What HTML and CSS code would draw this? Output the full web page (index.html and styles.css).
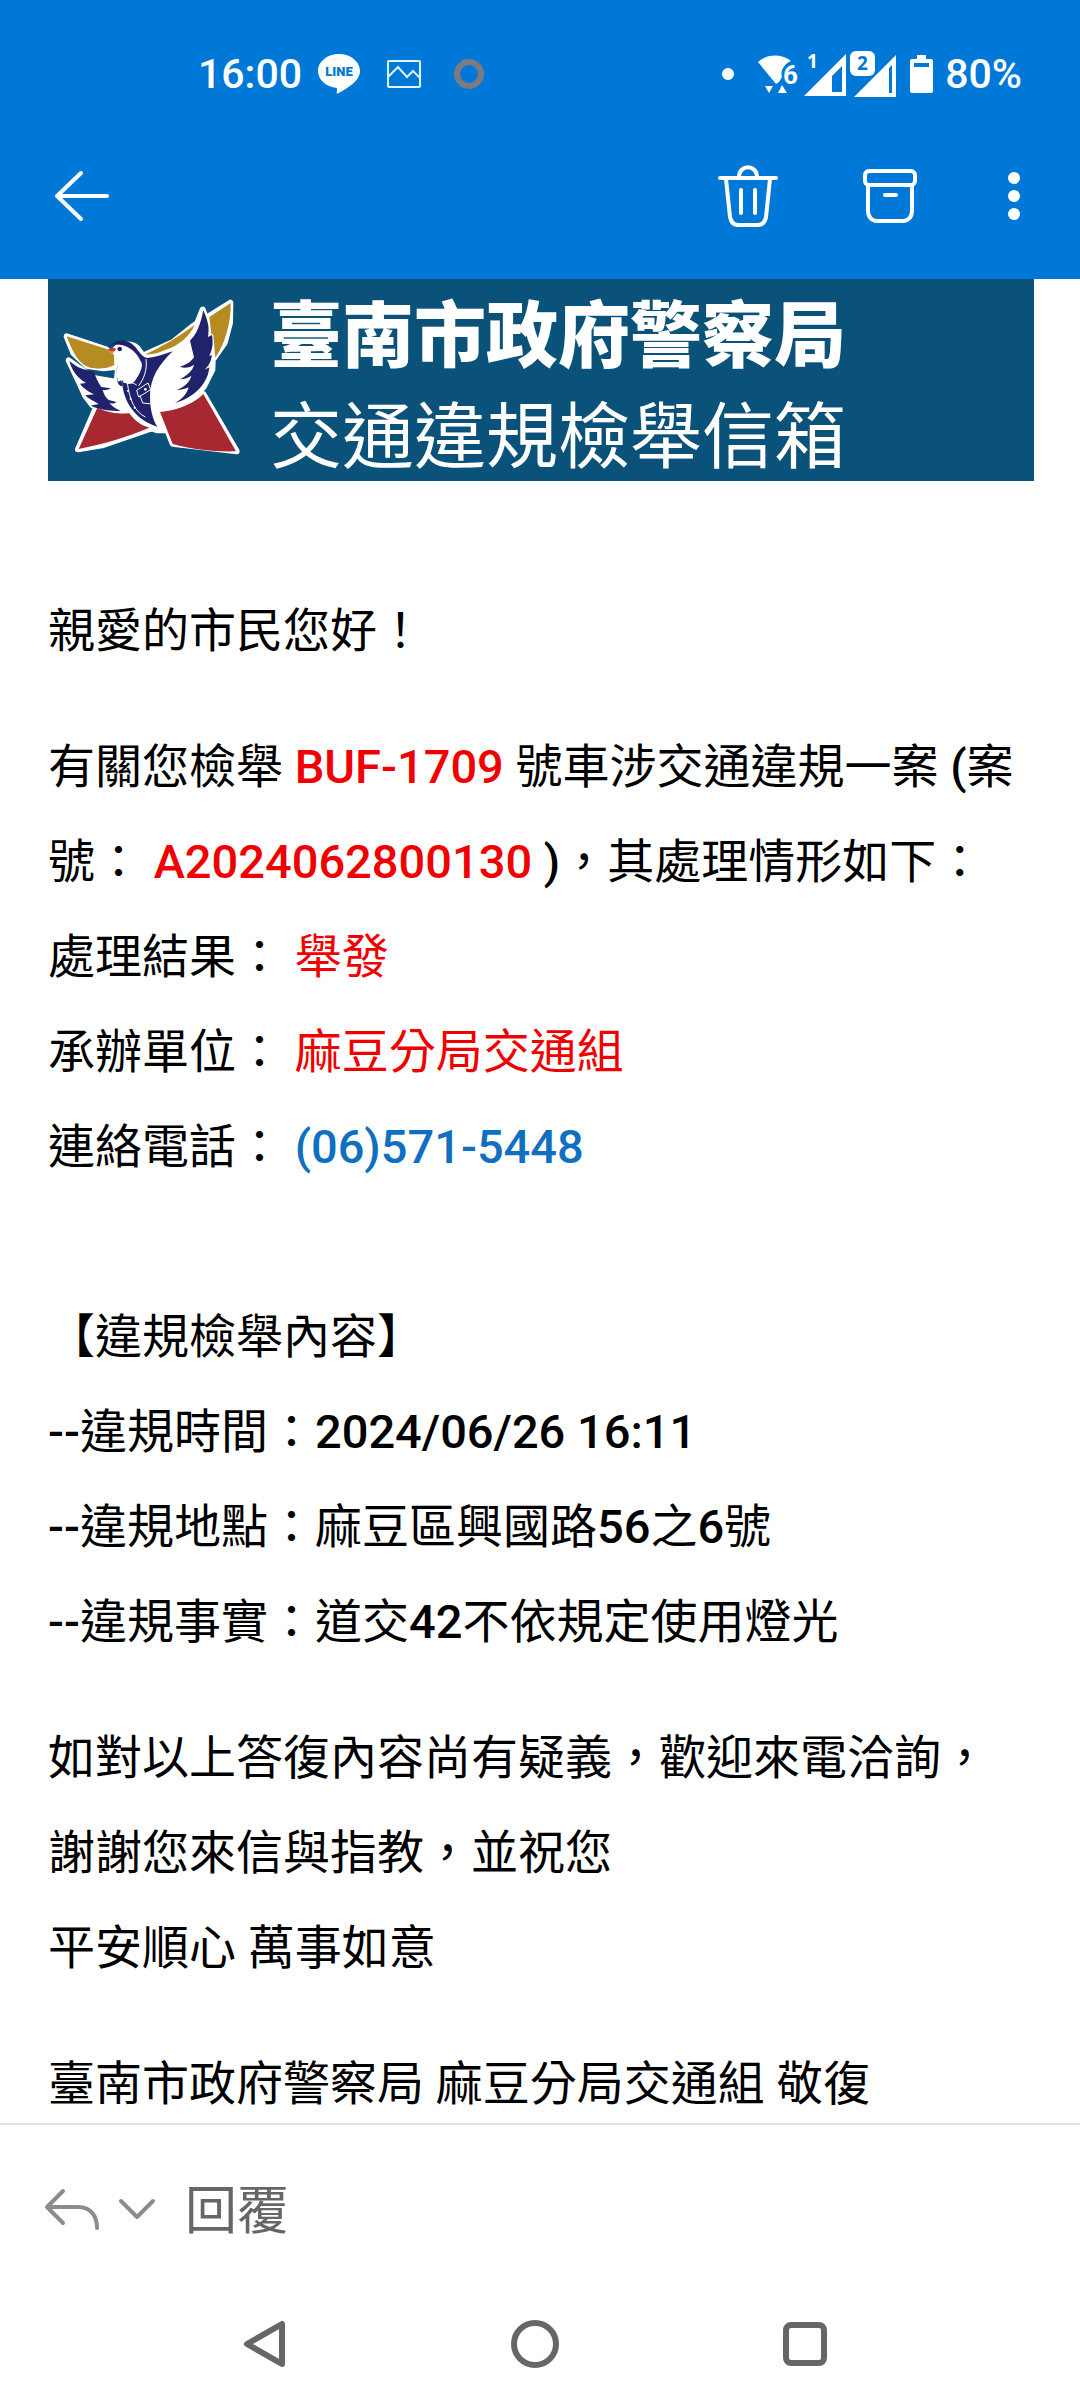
FILE: index.html
```html
<!DOCTYPE html>
<html lang="zh-Hant">
<head>
  <meta charset="UTF-8" />
  <title>交通違規檢舉信箱</title>
  <meta name="viewport" content="width=device-width, initial-scale=1.0" />
  <link rel="stylesheet" href="styles.css">
</head>
<body>
  <header class="app-header">
    <div class="status-bar">
      <span class="clock">16:00</span>
      <svg class="line-icon" width="42" height="40" viewBox="0 0 42 40">
        <path d="M21 0C9.500 0 0 7.500 0 17c0 8.500 7.500 15.500 17.800 16.800 1.600.4 1.400 1.500.9 4.700-.1.900.5 1.400 1.600.8C28 35 42 27.500 42 17 42 7.500 32.500 0 21 0z" fill="#fff"/>
        <text x="21" y="22" text-anchor="middle">LINE</text>
      </svg>
      <svg class="photo-icon" width="34" height="28" viewBox="0 0 34 28" fill="none" stroke="#dff6ff" stroke-width="2">
        <rect x="1" y="1" width="32" height="26" rx="1"/>
        <path d="M1 17l10-10 9 10 6-6 7 7"/>
      </svg>
      <svg width="32" height="32" viewBox="0 0 32 32">
        <circle cx="16" cy="16" r="12" fill="none" stroke="#7b7b80" stroke-width="6"/>
      </svg>
      <div class="status-right">
        <svg class="dot-icon" width="12" height="12" viewBox="0 0 12 12"><circle cx="6" cy="6" r="6" fill="#fff"/></svg>
        <svg class="wifi-icon" width="40" height="42" viewBox="0 0 40 42" fill="#fff">
          <path d="M0 9C9 .500 24 .500 33 8c-7 3-11 10-9 16l-3 5-3 2z"/>
          <path d="M7 33h8l-4 7zM20 40h9l-5-8z"/>
          <text x="25" y="31">6</text>
        </svg>
        <svg class="signal-icon" width="43" height="44" viewBox="0 0 43 44">
          <path d="M42 2v42H0zM38 14L28 24v16h10z" fill="#fff" fill-rule="evenodd"/>
          <text x="3" y="16" fill="#fff">1</text>
        </svg>
        <svg class="signal-icon" width="47" height="46" viewBox="0 0 47 46">
          <path d="M46 4v42H4zM42 14l-3 3v25h3z" fill="#fff" fill-rule="evenodd"/>
          <rect x="0" y="0" width="25" height="25" rx="6" fill="#fff"/>
          <text x="7" y="19" fill="#0078d7">2</text>
        </svg>
        <svg class="battery-icon" width="23" height="38" viewBox="0 0 23 38">
          <path d="M7 0h9v4h5a2 2 0 0 1 2 2v30a2 2 0 0 1-2 2H2a2 2 0 0 1-2-2V6a2 2 0 0 1 2-2h5zM4 8v4h15V8z" fill="#fff" fill-rule="evenodd"/>
        </svg>
        <span class="percent">80%</span>
      </div>
    </div>
    <nav class="toolbar">
      <button class="icon-btn" aria-label="返回">
        <svg width="54" height="50" viewBox="0 0 54 50" fill="none" stroke="#fff" stroke-width="4" stroke-linecap="round" stroke-linejoin="round">
          <path d="M26 2L2 25l24 23M2 25h50"/>
        </svg>
      </button>
      <button class="icon-btn delete-btn" aria-label="刪除">
        <svg width="60" height="62" viewBox="0 0 60 62" fill="none" stroke="#fff" stroke-width="4" stroke-linecap="round" stroke-linejoin="round">
          <path d="M2 13h56M21 12c0-13 18-13 18 0M8 14l4 38c1 5 4 8 8 8h20c4 0 7-3 8-8l4-38M23 25v23M37 25v23"/>
        </svg>
      </button>
      <button class="icon-btn archive-btn" aria-label="封存">
        <svg width="54" height="54" viewBox="0 0 54 54" fill="none" stroke="#fff" stroke-width="4" stroke-linecap="round" stroke-linejoin="round">
          <rect x="2" y="2" width="50" height="14" rx="4"/>
          <path d="M5 17v25c0 6 4 10 9 10h26c5 0 9-4 9-10V17M22 26h11"/>
        </svg>
      </button>
      <button class="icon-btn more-btn" aria-label="更多選項">
        <svg width="12" height="48" viewBox="0 0 12 48" fill="#fff">
          <circle cx="6" cy="6" r="6"/><circle cx="6" cy="24" r="6"/><circle cx="6" cy="42" r="6"/>
        </svg>
      </button>
    </nav>
  </header>

  <main class="mail">
    <div class="banner">
      <svg class="logo" width="179" height="167" viewBox="66 80 537 501">
        <!-- white outline behind every part -->
        <g fill="#fff" stroke="#fff" stroke-width="18" stroke-linejoin="round">
          <path d="M168 412L114 537l72-12 146-50-62-50zM360 425l38 95 192 23-100-172z"/>
          <path d="M80 198l20 50 40 38 50 8 34-4-4-34-20-18zM318 252l80-36 60-48 113-71-1 60-16 60-32 46-62-80-80 50z"/>
          <path d="M86 270l34 72 16 35 22 28 60 14 50 6 35 40 50 15 22 0 4-62 64-20 48-48 26-52 2-54-6-60-25-66-22 55-68 62-50 22-34 6-22-30c-22-18-58-12-74 14l-10 12 28 16-6 60-70-12z"/>
        </g>
        <path d="M80 198l120 38 22 18 1 30c-20 12-52 12-72 8-36-8-55-52-71-94z" fill="#b58c22"/>
        <path d="M316 252c48-22 92-48 148-88-14 32-46 62-90 76-18 8-38 14-58 12zM508 140l64-42c2 54-16 122-46 164l-6-68-6-4z" fill="#b58c22"/>
        <path d="M172 412c32 16 62 18 96 17 16 22 34 36 60 43-70 30-138 48-212 64zM360 425c44-4 96-20 130-54l98 172c-68 2-130-6-190-22z" fill="#a72831"/>
        <path d="M88 272c24 20 44 28 72 30 8 20 16 38 24 48l28 4c-10 6-20 6-24 5 4 14 10 24 18 30l24 6c-10 6-18 5-22 3 8 10 20 18 34 24-30 0-62-4-90-16l24-5c-18-10-32-16-40-26l26-3c-20-10-34-20-42-32l18-2c-22-12-42-34-50-66z" fill="#20226b"/>
        <path d="M490 120c16 36 18 54 14 80l12-6c4 28 2 38-8 64l8-4c-4 24-10 32-22 44l14-7c-4 42-34 86-104 108 24-14 36-28 42-48-8 4-20 8-36 8 26-10 40-26 44-42-10 6-22 10-34 10 24-14 38-26 42-44-12 8-28 12-42 6 22-6 34-16 42-28l-12-50c20-18 32-50 40-91z" fill="#20226b"/>
        <path d="M204 234c16-28 58-34 84-2 14 18 20 28 34 31 26-2 48-10 76-20-42 40-68 82-68 134 0 38 8 72 22 92-66-20-104-76-106-140 10 14 26 16 38 4 12-16 30-48 18-60-16-38-50-54-84-50-6 1-10 6-14 11z" fill="#20226b"/>
        <path d="M234 276c-6 22-6 42 0 58l10-4 4 18c-22 0-20-42-14-72z" fill="#20226b"/>
        <path d="M318 266c4 32-6 60-22 80M250 336c20-2 34 4 40 8M262 336c6 52 22 88 54 104M290 360l34-22 8 20-36 22zM300 376l8 22 30 3" fill="none" stroke="#fff" stroke-width="3"/>
        <g fill="#fff"><circle cx="264" cy="362" r="3"/><circle cx="272" cy="386" r="3"/><circle cx="284" cy="412" r="3"/><circle cx="316" cy="357" r="4"/></g>
        <circle cx="239" cy="236" r="7" fill="#20226b"/>
        <path d="M202 240c8-8 18-10 26-5-4 10-8 12-26 5z" fill="#c23b35"/>
        <path d="M203 241l18 2-2 8z" fill="#d8902c"/>
      </svg>
      <h1 class="banner-title">臺南市政府警察局<span>交通違規檢舉信箱</span></h1>
    </div>

    <div class="mail-body">
      <p>親愛的市民您好！</p>
      <p>
        有關您檢舉 <b class="highlight">BUF-1709</b> 號車涉交通違規一案 <b>(</b>案號： <b class="highlight">A2024062800130</b> <b>)</b>，其處理情形如下：<br>
        處理結果： <span class="highlight">舉發</span><br>
        承辦單位： <span class="highlight">麻豆分局交通組</span><br>
        連絡電話： <a href="tel:065715448">(06)571-5448</a><br>
        <br>
        【違規檢舉內容】<br>
        <b>--</b>違規時間：<b>2024/06/26 16:11</b><br>
        <b>--</b>違規地點：麻豆區興國路<b>56</b>之<b>6</b>號<br>
        <b>--</b>違規事實：道交<b>42</b>不依規定使用燈光
      </p>
      <p>
        如對以上答復內容尚有疑義，歡迎來電洽詢，<br>
        謝謝您來信與指教，並祝您<br>
        平安順心 萬事如意
      </p>
      <p>臺南市政府警察局 麻豆分局交通組 敬復</p>
    </div>
  </main>

  <footer class="app-footer">
    <div class="reply-bar">
      <button class="icon-btn" aria-label="回覆寄件者">
        <svg width="54" height="42" viewBox="0 0 54 42" fill="none" stroke="#8c8c8c" stroke-width="4" stroke-linecap="round" stroke-linejoin="round">
          <path d="M18 3L2 19l16 16M2 19h31c12 0 19 8 19 21"/>
        </svg>
      </button>
      <button class="icon-btn" aria-label="回覆選項">
        <svg width="36" height="20" viewBox="0 0 36 20" fill="none" stroke="#8c8c8c" stroke-width="4" stroke-linecap="round" stroke-linejoin="round">
          <path d="M2 2l16 16L34 2"/>
        </svg>
      </button>
      <button class="reply-btn">回覆</button>
    </div>
    <nav class="nav-bar">
      <button class="icon-btn" aria-label="上一頁">
        <svg width="42" height="46" viewBox="0 0 42 46" fill="none" stroke="#666" stroke-width="6" stroke-linejoin="round">
          <path d="M3 23L38 3v40z"/>
        </svg>
      </button>
      <button class="icon-btn" aria-label="主畫面">
        <svg width="48" height="48" viewBox="0 0 48 48" fill="none" stroke="#666" stroke-width="6"><circle cx="24" cy="24" r="21"/></svg>
      </button>
      <button class="icon-btn" aria-label="最近使用">
        <svg width="44" height="44" viewBox="0 0 44 44" fill="none" stroke="#666" stroke-width="6"><rect x="3" y="3" width="38" height="38" rx="5"/></svg>
      </button>
    </nav>
  </footer>
</body>
</html>
```
FILE: styles.css
```css
* {
  box-sizing: border-box;
}

body {
  font-family: Roboto, 'Noto Sans CJK TC', sans-serif;
  margin: 0;
  height: 100vh;
  display: flex;
  flex-direction: column;
  background: #fff;
  color: #000;
}

svg {
  display: block;
  flex-shrink: 0;
  overflow: visible;
}

.icon-btn {
  display: flex;
  align-items: center;
  justify-content: center;
  padding: 0;
  border: none;
  background: none;
  cursor: pointer;
}

.app-header {
  flex-shrink: 0;
  padding-bottom: 35px;
  background: #0078d7;
  color: #fff;
}

.status-bar {
  display: flex;
  align-items: center;
  height: 148px;
  padding: 0 58px 0 198px;
}

.clock,
.percent {
  font-size: 41px;
  font-weight: 500;
}

.line-icon {
  margin: 0 27px 0 16px;
}

.line-icon text {
  font-size: 13px;
  font-weight: 900;
  fill: #0078d7;
}

.photo-icon {
  margin-right: 32px;
}

.status-right {
  display: flex;
  align-items: center;
  margin-left: auto;
}

.dot-icon {
  margin-right: 24px;
}

.wifi-icon {
  margin-right: 6px;
}

.wifi-icon text {
  font-size: 26px;
  font-weight: 700;
}

.signal-icon {
  margin-right: 3px;
}

.signal-icon text {
  font-family: 'Noto Sans', sans-serif;
  font-size: 19px;
  font-weight: 700;
}

.battery-icon {
  margin: 0 12px 0 10px;
}

.toolbar {
  display: flex;
  align-items: center;
  height: 96px;
  padding: 0 60px 0 55px;
}

.delete-btn {
  margin-left: auto;
}

.archive-btn {
  margin: 0 91px 0 85px;
}

.mail {
  flex: 1;
  min-height: 0;
  padding: 0 46px 0 48px;
  overflow-y: auto;
  scrollbar-width: none;
}

.banner {
  display: flex;
  align-items: center;
  gap: 29px;
  padding-left: 14px;
  background: #0a5279;
  color: #fff;
}

.banner-title {
  margin: 0;
  font-family: 'Noto Sans CJK TC', sans-serif;
  font-size: 72px;
  font-weight: 900;
  line-height: 101px;
}

.banner-title span {
  display: block;
  font-weight: 400;
}

.mail-body {
  padding-top: 102px;
  font-size: 47px;
  line-height: 95px;
}

.mail-body p {
  margin: 0 0 41px;
}

.mail-body b {
  font-weight: 500;
}

.mail-body a {
  color: #0f6fc0;
  font-weight: 500;
  text-decoration: none;
}

.mail-body .highlight {
  color: #f00000;
}

.app-footer {
  flex-shrink: 0;
  border-top: 2px solid #e1e1e1;
  background: #fff;
}

.reply-bar {
  display: flex;
  align-items: center;
  gap: 20px;
  height: 168px;
  padding: 0 45px;
}

.reply-btn {
  padding: 0 10px 6px;
  border: none;
  background: none;
  color: #666;
  font-family: 'Noto Sans CJK TC', sans-serif;
  font-size: 52px;
  cursor: pointer;
}

.nav-bar {
  display: grid;
  grid-template-columns: repeat(3, 1fr);
  height: 107px;
  padding: 0 13% 6px 12%;
}
```
